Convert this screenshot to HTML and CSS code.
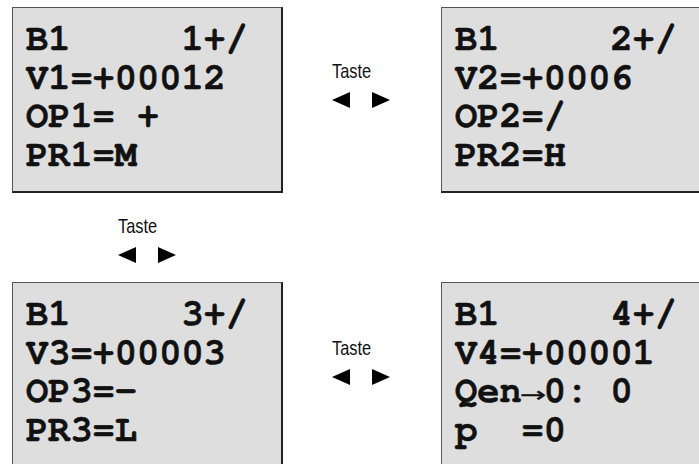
FILE: index.html
```html
<!DOCTYPE html>
<html>
<head>
<meta charset="utf-8">
<link rel="stylesheet" href="styles.css">
</head>
<body>
<div class="sheet">
  <div class="lcd">
    <div class="line">B1     1+/</div>
    <div class="line">V1=+00012</div>
    <div class="line">OP1= +</div>
    <div class="line">PR1=M</div>
  </div>
  <div class="key key-top">
    <div class="group">
      <span class="label">Taste</span>
      <span class="arrows"><span class="tri tri-left"></span><span class="tri tri-right"></span></span>
    </div>
  </div>
  <div class="lcd">
    <div class="line">B1     2+/</div>
    <div class="line">V2=+0006</div>
    <div class="line">OP2=/</div>
    <div class="line">PR2=H</div>
  </div>

  <div class="key key-mid">
    <div class="group">
      <span class="label">Taste</span>
      <span class="arrows"><span class="tri tri-left"></span><span class="tri tri-right"></span></span>
    </div>
  </div>
  <div class="spacer"></div>
  <div class="spacer"></div>

  <div class="lcd">
    <div class="line">B1     3+/</div>
    <div class="line">V3=+00003</div>
    <div class="line">OP3=-</div>
    <div class="line">PR3=L</div>
  </div>
  <div class="key key-bottom">
    <div class="group">
      <span class="label">Taste</span>
      <span class="arrows"><span class="tri tri-left"></span><span class="tri tri-right"></span></span>
    </div>
  </div>
  <div class="lcd">
    <div class="line">B1     4+/</div>
    <div class="line">V4=+00001</div>
    <div class="line">Qen<span class="to">→</span>0: 0</div>
    <div class="line">p  =0</div>
  </div>
</div>
</body>
</html>
```

FILE: styles.css
```css
html, body {
  margin: 0;
  padding: 0;
  background: #ffffff;
  overflow: hidden;
}

.sheet {
  display: grid;
  grid-template-columns: 271px 158px 271px;
  grid-template-rows: 186px 89px 186px;
  padding: 7px 0 0 12px;
  width: 712px;
}

.lcd {
  background: #dedede;
  border-left: 1px solid #555555;
  border-top: 1px solid #555555;
  border-right: 2px solid #222222;
  border-bottom: 2px solid #222222;
  padding: 12px 0 0 13px;
  font-family: "Nimbus Mono PS", "Nimbus Mono L", "FreeMono", "Liberation Mono", monospace;
  font-weight: bold;
  font-size: 37px;
  line-height: 38.5px;
  color: #111111;
  -webkit-text-stroke: 0.6px #111111;
}

.line {
  height: 38.5px;
  white-space: pre;
}

.to {
  display: inline-block;
  width: 22.2px;
  text-align: center;
  font-family: "DejaVu Sans", sans-serif;
  font-weight: normal;
  font-size: 21px;
  line-height: 20px;
  -webkit-text-stroke: 0.3px #111111;
  transform: scaleX(1.5);
}

.key {
  display: flex;
  flex-direction: column;
  align-items: center;
  font-family: "Liberation Sans", Arial, sans-serif;
  color: #111111;
}

.group {
  display: flex;
  flex-direction: column;
  align-items: flex-start;
  width: 60px;
}

.key-top {
  padding-top: 53px;
}

.key-mid {
  padding-top: 22px;
}

.key-bottom {
  padding-top: 55px;
}

.label {
  font-size: 21px;
  line-height: 22px;
  transform: scaleX(0.78);
  transform-origin: left center;
}

.arrows {
  display: flex;
  gap: 22px;
  margin-top: 10px;
}

.tri {
  width: 0;
  height: 0;
  border-top: 8.5px solid transparent;
  border-bottom: 8.5px solid transparent;
}

.tri-left {
  border-right: 18px solid #000000;
}

.tri-right {
  border-left: 18px solid #000000;
}
```
